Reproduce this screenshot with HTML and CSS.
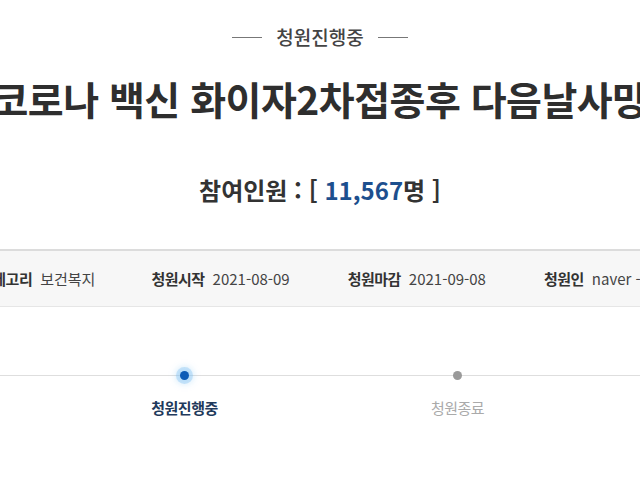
FILE: index.html
```html
<!DOCTYPE html>
<html lang="ko">
<head>
<meta charset="utf-8">
<link rel="stylesheet" href="styles.css">
</head>
<body>
<div class="page">
  <div class="status">
    <span class="status-line"></span>
    <span class="status-text">청원진행중</span>
    <span class="status-line"></span>
  </div>
  <div class="title-wrap">
    <h1 class="title">코로나 백신 화이자2차접종후 다음날사망</h1>
  </div>
  <div class="count">참여인원 : [ <span class="count-num">11,567</span>명 ]</div>
  <div class="info">
    <div class="info-item"><span class="info-label">카테고리</span><span class="info-value">보건복지</span></div>
    <div class="info-item"><span class="info-label">청원시작</span><span class="info-value">2021-08-09</span></div>
    <div class="info-item"><span class="info-label">청원마감</span><span class="info-value">2021-09-08</span></div>
    <div class="info-item"><span class="info-label">청원인</span><span class="info-value">naver - ***</span></div>
  </div>
  <div class="progress">
    <div class="step step-active">
      <span class="dot"></span>
      <span class="step-label">청원진행중</span>
    </div>
    <div class="step">
      <span class="dot"></span>
      <span class="step-label">청원종료</span>
    </div>
  </div>
</div>
</body>
</html>
```
FILE: styles.css
```css
html, body {
  margin: 0;
  padding: 0;
  background: #fff;
}
body {
  width: 640px;
  height: 480px;
  overflow: hidden;
  font-family: "Noto Sans CJK KR", "Noto Sans", sans-serif;
  color: #333;
}
.page {
  display: flex;
  flex-direction: column;
}
.status {
  display: flex;
  justify-content: center;
  align-items: center;
  gap: 14px;
  margin-top: 23px;
  height: 28px;
}
.status-line {
  width: 30px;
  height: 1px;
  background: #777;
}
.status-text {
  font-size: 19px;
  font-weight: 500;
  color: #444;
  line-height: 28px;
}
.title-wrap {
  display: flex;
  justify-content: center;
  overflow: hidden;
  margin-top: 19px;
}
.title {
  flex: none;
  margin: 0;
  white-space: nowrap;
  font-size: 39px;
  font-weight: 700;
  line-height: 56px;
  letter-spacing: -0.5px;
  color: #2e2e2e;
}
.count {
  margin-top: 48px;
  text-align: center;
  font-size: 24px;
  font-weight: 700;
  line-height: 32px;
  letter-spacing: 0;
  color: #333;
}
.count-num {
  color: #1d4f8e;
}
.info {
  margin-top: 43px;
  height: 55px;
  background: #f7f7f7;
  border-top: 2px solid #dcdcdc;
  border-bottom: 1px solid #e6e6e6;
  display: flex;
  align-items: center;
  gap: 58px;
  margin-left: -21px;
  margin-right: -200px;
  font-size: 15px;
}
.info-item {
  display: flex;
  gap: 8px;
  white-space: nowrap;
}
.info-item:first-child {
  margin-right: -2px;
}
.info-label {
  font-weight: 700;
  color: #333;
  letter-spacing: -0.5px;
}
.info-value {
  color: #444;
}
.progress {
  position: relative;
  display: flex;
  margin-top: 64px;
  padding-left: 48px;
}
.progress::before {
  content: "";
  position: absolute;
  left: 0;
  right: 0;
  top: 4px;
  height: 1px;
  background: #dedede;
}
.step {
  position: relative;
  width: 273px;
  display: flex;
  flex-direction: column;
  align-items: center;
  gap: 18px;
}
.dot {
  width: 9px;
  height: 9px;
  border-radius: 50%;
  background: #9a9a9a;
}
.step-active .dot {
  background: #0d5cb6;
  box-shadow: 0 0 0 4px rgba(120, 190, 240, 0.35), 0 0 6px 5px rgba(150, 205, 245, 0.35);
}
.step-label {
  font-size: 15px;
  line-height: 20px;
  color: #aaa;
  letter-spacing: -0.5px;
}
.step-active .step-label {
  font-weight: 700;
  color: #1f3a5c;
}
```
